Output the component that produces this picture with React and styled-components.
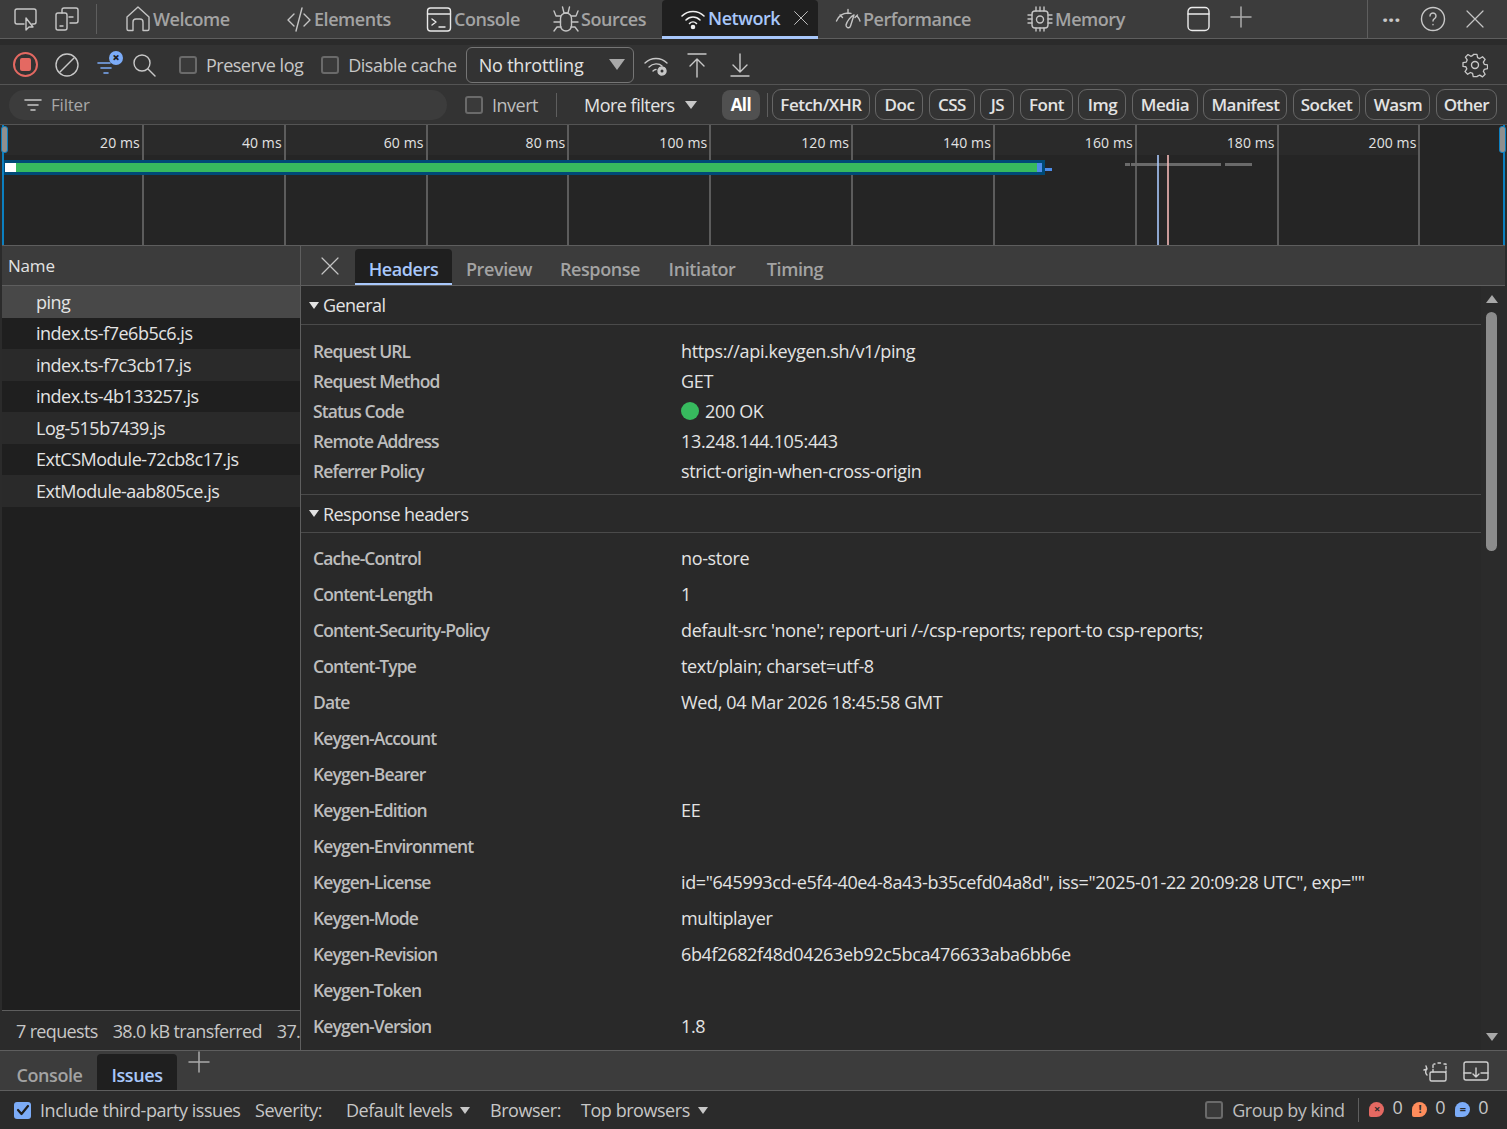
import styled, { createGlobalStyle } from "styled-components";

const GlobalStyle = createGlobalStyle`
  html, body {
    margin: 0;
    padding: 0;
    background: #2b2b2b;
  }
  * { box-sizing: border-box; }
  body {
    font-family: "Open Sans", "Noto Sans", sans-serif;
    color: #e3e3e3;
    letter-spacing: -0.2px;
  }
`;

const Icon = ({ w = 26, h = 26, vb = "0 0 26 26", color = "#c8c8c8", sw = 1.4, children }) => (
  <svg width={w} height={h} viewBox={vb} fill="none" stroke={color} strokeWidth={sw} strokeLinecap="round" strokeLinejoin="round" style={{ flex: "none" }}>
    {children}
  </svg>
);

const Close = ({ size = 20, color = "#c4c4c4" }) => (
  <Icon w={size} h={size} vb="0 0 20 20" color={color} sw={1.2}>
    <path d="M2 2l16 16M18 2L2 18" />
  </Icon>
);

const Plus = ({ size = 24, color = "#aaa" }) => (
  <Icon w={size} h={size} vb="0 0 24 24" color={color} sw={1.5}>
    <path d="M12 2v20M2 12h20" />
  </Icon>
);

const tabs = [
  {
    label: "Welcome", width: 161,
    icon: <path d="M2 23V11L13 1l11 10v12a1.500 1.500 0 0 1-1.500 1.500H18V16a3 3 0 0 0-3-3h-4a3 3 0 0 0-3 3v8.500H3.500A1.500 1.500 0 0 1 2 23z" />,
  },
  {
    label: "Elements", width: 140,
    icon: <path d="M8 8l-6 6 6 6M18 8l6 6-6 6M16 2l-6 23" />,
  },
  {
    label: "Console", width: 127, bright: true,
    icon: <><rect x="1.500" y="2" width="23" height="23" rx="3" /><path d="M1.500 8h23M6 13l4 3-4 3M13 21h6" /></>,
  },
  {
    label: "Sources", width: 122,
    icon: <><rect x="7.500" y="7" width="11" height="18" rx="5.500" /><path d="M9.500 1l1.500 6h4l1.500-6M1 5l2 5h4.500M25 5l-2 5h-4.500M1 16h6.500M25 16h-6.500M1 25l3-4h4M25 25l-3-4h-4" /></>,
  },
];

const tabs2 = [
  {
    label: "Performance", width: 196, pad: 17,
    icon: <><path d="M1.500 15A13 13 0 0 1 13 7a13 13 0 0 1 3 .4M22 10a13 13 0 0 1 3 5M13 3.500v4M5 9l2.500 2.500M22.500 9l-2.500 2.500" /><path d="M11 19c0 3 3.500 4 4.500 1L19 9c-3 1-7 6-8 10z" /></>,
  },
  {
    label: "Memory", width: 171,
    icon: <><rect x="5" y="5" width="16" height="17" rx="3" /><circle cx="13" cy="13.500" r="3.500" /><path d="M9 1v4M13 1v4M17 1v4M9 22v3M13 22v3M17 22v3M1 9h4M1 13h4M1 17h4M21 9h4M21 13h4M21 17h4" /></>,
  },
];

const filterChips = ["Fetch/XHR", "Doc", "CSS", "JS", "Font", "Img", "Media", "Manifest", "Socket", "Wasm", "Other"];
const chipWidths = [98, 48, 46, 34, 53, 48, 66, 84, 67, 65, 61];
const ticks = ["20 ms", "40 ms", "60 ms", "80 ms", "100 ms", "120 ms", "140 ms", "160 ms", "180 ms", "200 ms"];
const files = ["ping", "index.ts-f7e6b5c6.js", "index.ts-f7c3cb17.js", "index.ts-4b133257.js", "Log-515b7439.js", "ExtCSModule-72cb8c17.js", "ExtModule-aab805ce.js"];
const detailTabs = ["Headers", "Preview", "Response", "Initiator", "Timing"];
const detailTabWidths = [97, 94, 108, 96, 90];

const general = [
  ["Request URL", "https://api.keygen.sh/v1/ping"],
  ["Request Method", "GET"],
  ["Status Code", "200 OK", true],
  ["Remote Address", "13.248.144.105:443"],
  ["Referrer Policy", "strict-origin-when-cross-origin"],
];

const response = [
  ["Cache-Control", "no-store"],
  ["Content-Length", "1"],
  ["Content-Security-Policy", "default-src 'none'; report-uri /-/csp-reports; report-to csp-reports;"],
  ["Content-Type", "text/plain; charset=utf-8"],
  ["Date", "Wed, 04 Mar 2026 18:45:58 GMT"],
  ["Keygen-Account", ""],
  ["Keygen-Bearer", ""],
  ["Keygen-Edition", "EE"],
  ["Keygen-Environment", ""],
  ["Keygen-License", 'id="645993cd-e5f4-40e4-8a43-b35cefd04a8d", iss="2025-01-22 20:09:28 UTC", exp=""'],
  ["Keygen-Mode", "multiplayer"],
  ["Keygen-Revision", "6b4f2682f48d04263eb92c5bca476633aba6bb6e"],
  ["Keygen-Token", ""],
  ["Keygen-Version", "1.8"],
];

function PanelTab({ tab }) {
  return (
    <Tab $width={tab.width} $pad={tab.pad}>
      <Icon color={tab.bright ? "#e8e8e8" : "#c4c4c4"}>{tab.icon}</Icon>
      <span>{tab.label}</span>
    </Tab>
  );
}

function App() {
  return (
    <>
      <GlobalStyle />
      <Page>
        <TabBar>
          <Icon w={28} vb="0 0 28 26"><path d="M20 18h2a2 2 0 0 0 2-2V5a2 2 0 0 0-2-2H5a2 2 0 0 0-2 2v11a2 2 0 0 0 2 2h7" /><path d="M14 12v12l3-3 4 0z" /></Icon>
          <DeviceIcon>
            <Icon w={28} vb="0 0 28 26"><path d="M9 7V4a2 2 0 0 1 2-2h12a2 2 0 0 1 2 2v11a2 2 0 0 1-2 2h-6" /><rect x="3" y="7" width="11" height="17" rx="2" /><path d="M7 20h3M16 11h4" /></Icon>
          </DeviceIcon>
          <TabDivider />
          {tabs.map((t) => <PanelTab key={t.label} tab={t} />)}
          <ActiveTab>
            <Icon color="#f0f0f0" sw={1.6}><path d="M2 11c6-6 16-6 22 0M6 15c4-4 10-4 14 0M9.500 18.500c2-2 5-2 7 0" /><circle cx="13" cy="22" r="1.500" fill="#f0f0f0" /></Icon>
            <span>Network</span>
            <CloseSlot><Close size={16} /></CloseSlot>
          </ActiveTab>
          {tabs2.map((t) => <PanelTab key={t.label} tab={t} />)}
          <Icon color="#ececec" vb="0 0 26 26"><rect x="3" y="1.500" width="21" height="23" rx="4" /><path d="M3 8h21" /></Icon>
          <PlusSlot><Plus /></PlusSlot>
          <TabEnd>
            <Dots>···</Dots>
            <Icon><circle cx="13" cy="13" r="11.500" /><path d="M10 10a3 3 0 1 1 4.500 2.600c-1 .6-1.500 1.200-1.500 2.400M13 18.500v.3" /></Icon>
            <Close />
          </TabEnd>
        </TabBar>
        <DarkStrip />
        <Toolbar>
          <RecordButton><RecordDot /></RecordButton>
          <ToolIcon $w={42}><Icon><circle cx="13" cy="13" r="11" /><path d="M6 20L20 6" /></Icon></ToolIcon>
          <FilterClear>
            <Icon color="#7cacf8" sw={1.6}><path d="M1 13h12M4 18h10M7 23h4" /></Icon>
            <ClearBadge>×</ClearBadge>
          </FilterClear>
          <ToolIcon $w={30} $ml={7} $mr={20}><Icon w={24} h={24} vb="0 0 24 24"><circle cx="10" cy="10" r="8" /><path d="M16 16l7 7" /></Icon></ToolIcon>
          <CheckLabel $mr={18}><Check />Preserve log</CheckLabel>
          <CheckLabel $mr={9}><Check />Disable cache</CheckLabel>
          <Throttle>
            <span>No throttling</span>
            <Caret $size={8} $color="#a8a8a8" />
          </Throttle>
          <ToolIcon $w={44}>
            <Icon>
              <path d="M2 11c6-6 16-6 22 0M6 15c4-4 10-4 13-1M10 19c1-1 2-1.500 3-1.500" />
              <circle cx="19" cy="19" r="4" fill="#c8c8c8" stroke="#c8c8c8" strokeDasharray="2 1" />
              <circle cx="19" cy="19" r="1.500" fill="#333" stroke="none" />
            </Icon>
          </ToolIcon>
          <ToolIcon $w={38}><Icon><path d="M4 2h18M13 25V7M6 14l7-7 7 7" /></Icon></ToolIcon>
          <ToolIcon $w={48}><Icon><path d="M13 2v18M6 13l7 7 7-7M4 24h18" /></Icon></ToolIcon>
          <SettingsSlot>
            <Icon>
              <path d="M11 2h4l.7 3.500 2.300 1 3-1.900 2.800 2.800-1.900 3 1 2.300 3.500.7v4l-3.500.7-1 2.300 1.900 3-2.800 2.800-3-1.900-2.300 1L15 26h-4l-.7-3.500-2.300-1-3 1.900-2.800-2.800 1.900-3-1-2.300L0 15v-4l3.500-.7 1-2.300-1.900-3L5.400 2.200l3 1.900 2.300-1z" transform="translate(1 .5) scale(.93)" />
              <circle cx="13" cy="13" r="3.500" />
            </Icon>
          </SettingsSlot>
        </Toolbar>
        <FilterBar>
          <FilterInput>
            <Icon w={18} h={14} vb="0 0 18 14" sw={1.6}><path d="M1 2h16M4 7h10M7 12h4" /></Icon>
            <span>Filter</span>
          </FilterInput>
          <CheckLabel $mr={18} $dim><Check />Invert</CheckLabel>
          <VDivider />
          <MoreFilters>More filters<Caret $size={6} $color="#c8c8c8" /></MoreFilters>
          <AllChip>All</AllChip>
          <VDivider $ml={7} $mr={4} />
          <Chips>
            {filterChips.map((c, i) => <Chip key={c} $width={chipWidths[i]}>{c}</Chip>)}
          </Chips>
        </FilterBar>
        <Timeline>
          <TimeHead>
            {ticks.map((t) => <TimeCell key={t}><TimeLabel>{t}</TimeLabel></TimeCell>)}
          </TimeHead>
          <RequestBar>
            <BarStart />
            <BarBody />
            <BarEnd />
          </RequestBar>
          <BarTail />
          <Ghost $x={1125} $w={5} />
          <Ghost $x={1131} $w={10} />
          <Ghost $x={1141} $w={80} />
          <Ghost $x={1225} $w={27} />
          <Marker $x={1157} $color="#a8c7fa" />
          <Marker $x={1167} $color="#f2b8b5" />
          <SelectionLine $side="left" />
          <SelectionLine $side="right" />
          <Handle $side="left" />
          <Handle $side="right" />
        </Timeline>
        <Split>
          <NamePane>
            <NameHead>Name</NameHead>
            <NameList>
              {files.map((f, i) => <NameRow key={f} $i={i}>{f}</NameRow>)}
            </NameList>
            <Summary>
              <span>7 requests</span>
              <span>38.0 kB transferred</span>
              <span>37.2 kB resources</span>
            </Summary>
          </NamePane>
          <DetailPane>
            <DetailTabs>
              <CloseButton><Close size={20} /></CloseButton>
              {detailTabs.map((t, i) => (
                <DetailTab key={t} $width={detailTabWidths[i]} $active={i === 0}>{t}</DetailTab>
              ))}
            </DetailTabs>
            <DetailBody>
              <Sections>
                <SectionHead $h={39}><Caret $size={5.500} $color="#e3e3e3" />General</SectionHead>
                <SectionRows $pt={11} $pb={8}>
                  {general.map(([k, v, ok]) => (
                    <HeaderRow key={k} $h={30}>
                      <HeaderKey>{k}</HeaderKey>
                      <HeaderValue>{ok && <StatusDot />}{v}</HeaderValue>
                    </HeaderRow>
                  ))}
                </SectionRows>
                <SectionHead $h={39} $top><Caret $size={5.500} $color="#e3e3e3" />Response headers</SectionHead>
                <SectionRows $pt={7} $pb={0}>
                  {response.map(([k, v]) => (
                    <HeaderRow key={k} $h={36}>
                      <HeaderKey>{k}</HeaderKey>
                      <HeaderValue>{v}</HeaderValue>
                    </HeaderRow>
                  ))}
                </SectionRows>
              </Sections>
              <Scrollbar>
                <ScrollArrow $up />
                <ScrollTrack><ScrollThumb /></ScrollTrack>
                <ScrollArrow />
              </Scrollbar>
            </DetailBody>
          </DetailPane>
        </Split>
        <DrawerTabs>
          <DrawerTab>Console</DrawerTab>
          <DrawerTab $active>Issues</DrawerTab>
          <PlusSlot $ml={10}><Plus /></PlusSlot>
          <DrawerEnd>
            <Icon w={28} vb="0 0 28 26" color="#d0d0d0"><path d="M6 10a4 4 0 0 0 0 6M3 11l3-1-1-3" /><rect x="9" y="13" width="16" height="9" rx="1.500" /><path d="M12 13V5h2M17 4h3M23 5h2v8" strokeDasharray="2.500 2" /></Icon>
            <Icon w={28} vb="0 0 28 26" color="#d0d0d0"><rect x="2" y="3" width="24" height="18" rx="2" /><path d="M2 14h7M19 14h7M14 9v9M11 15l3 3 3-3" /></Icon>
          </DrawerEnd>
        </DrawerTabs>
        <IssuesBar>
          <ThirdParty><CheckedBox><Icon w={14} h={14} vb="0 0 14 14" color="#1f1f1f" sw={2.2}><path d="M2 7l3.500 4L12 3" /></Icon></CheckedBox>Include third-party issues</ThirdParty>
          <IssueLabel $w={91}>Severity:</IssueLabel>
          <IssueSelect $w={144}>Default levels<Caret $size={5} $color="#c8c8c8" /></IssueSelect>
          <IssueLabel $w={91}>Browser:</IssueLabel>
          <IssueSelect>Top browsers<Caret $size={5} $color="#c8c8c8" /></IssueSelect>
          <IssueEnd>
            <CheckLabel $mr={14} $dim><Check />Group by kind</CheckLabel>
            <VDivider $h={24} />
            <Counter $color="#e46962" $glyph="×">0</Counter>
            <Counter $color="#ff8d5c" $glyph="!">0</Counter>
            <Counter $color="#7cacf8" $glyph="=">0</Counter>
          </IssueEnd>
        </IssuesBar>
      </Page>
    </>
  );
}

const Page = styled.div`
  width: 1507px;
  height: 1129px;
  display: flex;
  flex-direction: column;
  overflow: hidden;
  background: #2b2b2b;
  padding: 0 2px;
`;

const TabBar = styled.div`
  height: 39px;
  flex: none;
  margin: 0 -2px;
  padding-left: 12px;
  display: flex;
  align-items: center;
  background: #3c3c3c;
  border-bottom: 1px solid #5e5e5e;
`;

const DeviceIcon = styled.div`
  margin-left: 13px;
  display: flex;
`;

const TabDivider = styled.div`
  width: 1px;
  height: 30px;
  margin: 0 15px 0 15px;
  background: #5e5e5e;
`;

const Tab = styled.div`
  width: ${(p) => p.$width}px;
  flex: none;
  height: 38px;
  padding-left: ${(p) => p.$pad ?? 13}px;
  display: flex;
  align-items: center;
  font-size: 18px;
  font-weight: 600;
  color: #a3a3a3;
  letter-spacing: -0.45px;
  gap: 2px;
`;

const ActiveTab = styled.div`
  width: 156px;
  flex: none;
  height: 39px;
  padding: 0 9px 0 18px;
  display: flex;
  align-items: center;
  gap: 2px;
  font-size: 18px;
  font-weight: 600;
  letter-spacing: -0.45px;
  color: #a8c7fa;
  background: #1f1f1f;
  border-radius: 4px 4px 0 0;
  border-bottom: 3px solid #a8c7fa;
  margin-top: 1px;
`;

const CloseSlot = styled.div`
  margin-left: auto;
  display: flex;
`;

const PlusSlot = styled.div`
  display: flex;
  margin-left: ${(p) => p.$ml ?? 18}px;
  margin-top: -4px;
`;

const TabEnd = styled.div`
  margin-left: auto;
  height: 38px;
  width: 140px;
  padding: 0 22px 0 14px;
  border-left: 1px solid #5e5e5e;
  display: flex;
  align-items: center;
  justify-content: space-between;
`;

const Dots = styled.span`
  font-size: 22px;
  font-weight: 700;
  color: #c8c8c8;
  line-height: 1;
`;

const DarkStrip = styled.div`
  height: 6px;
  flex: none;
  margin: 0 -2px;
  background: #2b2b2b;
`;

const Toolbar = styled.div`
  height: 40px;
  flex: none;
  margin: 0 -2px;
  padding-left: 13px;
  display: flex;
  align-items: center;
  background: #333;
  border-bottom: 1px solid #545454;
`;

const RecordButton = styled.div`
  width: 25px;
  height: 25px;
  flex: none;
  border-radius: 50%;
  border: 2px solid #e46962;
  display: flex;
  align-items: center;
  justify-content: center;
  margin-right: 8px;
`;

const RecordDot = styled.div`
  width: 11px;
  height: 13px;
  border-radius: 2px;
  background: #e46962;
`;

const ToolIcon = styled.div`
  width: ${(p) => p.$w}px;
  flex: none;
  display: flex;
  justify-content: center;
  margin-left: ${(p) => p.$ml ?? 0}px;
  margin-right: ${(p) => p.$mr ?? 0}px;
`;

const FilterClear = styled.div`
  width: 36px;
  height: 30px;
  flex: none;
  position: relative;
  margin-left: 2px;
  margin-right: -4px;
  padding-left: 7px;
`;

const ClearBadge = styled.div`
  position: absolute;
  left: 19px;
  top: 1px;
  width: 14px;
  height: 14px;
  border-radius: 50%;
  background: #7cacf8;
  color: #1f1f1f;
  font-size: 13px;
  font-weight: 800;
  line-height: 13px;
  text-align: center;
`;

const CheckLabel = styled.label`
  display: flex;
  align-items: center;
  gap: 9px;
  font-size: 18px;
  letter-spacing: -0.5px;
  margin-right: ${(p) => p.$mr}px;
  color: ${(p) => (p.$dim ? "#bdbdbd" : "#c7c7c7")};
  white-space: nowrap;
`;

const Check = styled.span`
  display: inline-block;
  width: 18px;
  height: 18px;
  border: 2px solid #6a6a6a;
  border-radius: 3px;
  background: #3a3a3a;
`;

const Throttle = styled.div`
  width: 168px;
  height: 36px;
  flex: none;
  border: 1px solid #757575;
  border-radius: 6px;
  padding: 0 8px 0 12px;
  display: flex;
  align-items: center;
  justify-content: space-between;
  font-size: 18px;
  color: #e3e3e3;
`;

const Caret = styled.span`
  display: inline-block;
  flex: none;
  width: 0;
  height: 0;
  border-left: ${(p) => p.$size}px solid transparent;
  border-right: ${(p) => p.$size}px solid transparent;
  border-top: ${(p) => p.$size * 1.4}px solid ${(p) => p.$color};
`;

const SettingsSlot = styled.div`
  margin-left: auto;
  margin-right: 19px;
  display: flex;
`;

const FilterBar = styled.div`
  height: 40px;
  flex: none;
  margin: 0 -2px;
  padding-left: 9px;
  display: flex;
  align-items: center;
  background: #333;
  border-bottom: 1px solid #545454;
`;

const FilterInput = styled.div`
  width: 438px;
  height: 30px;
  flex: none;
  margin-right: 18px;
  padding-left: 15px;
  display: flex;
  align-items: center;
  gap: 9px;
  border-radius: 15px;
  background: #3c3c3c;
  font-size: 17px;
  color: #a8a8a8;
`;

const VDivider = styled.div`
  width: 1px;
  height: ${(p) => p.$h ?? 24}px;
  flex: none;
  background: #5e5e5e;
  margin-left: ${(p) => p.$ml ?? 0}px;
  margin-right: ${(p) => p.$mr ?? 0}px;
`;

const MoreFilters = styled.div`
  width: 165px;
  flex: none;
  padding-left: 27px;
  display: flex;
  align-items: center;
  gap: 10px;
  font-size: 18px;
  letter-spacing: -0.5px;
  white-space: nowrap;
  color: #e3e3e3;
`;

const AllChip = styled.div`
  width: 38px;
  height: 30px;
  flex: none;
  border-radius: 8px;
  background: #505050;
  display: flex;
  align-items: center;
  justify-content: center;
  font-size: 17px;
  font-weight: 700;
  letter-spacing: -0.5px;
  color: #fff;
`;

const Chips = styled.div`
  display: flex;
  gap: 5.500px;
`;

const Chip = styled.div`
  width: ${(p) => p.$width}px;
  height: 31px;
  flex: none;
  border: 1px solid #666;
  border-radius: 9px;
  display: flex;
  align-items: center;
  justify-content: center;
  font-size: 17px;
  font-weight: 600;
  letter-spacing: -0.5px;
  color: #e3e3e3;
`;

const Timeline = styled.div`
  height: 121px;
  flex: none;
  position: relative;
  background: #252525;
  border-bottom: 1px solid #5e5e5e;
`;

const TimeHead = styled.div`
  height: 120px;
  display: flex;
`;

const TimeCell = styled.div`
  width: 141.85px;
  flex: none;
  border-right: 2px solid #5c5c5c;
  background: linear-gradient(#2a2a2a 0 30px, transparent 30px);
  padding: 6px 2px 0 0;
  text-align: right;
`;

const TimeLabel = styled.span`
  font-size: 14px;
  letter-spacing: 0.1px;
  color: #e3e3e3;
`;

const RequestBar = styled.div`
  position: absolute;
  left: 2px;
  top: 35px;
  width: 1041px;
  height: 15px;
  padding: 3px;
  padding-left: 1px;
  background: #004a77;
  display: flex;
`;

const BarStart = styled.div`
  width: 11px;
  background: #fff;
`;

const BarBody = styled.div`
  flex: 1;
  background: #37ba5e;
`;

const BarEnd = styled.div`
  width: 5px;
  background: #4d8ce8;
`;

const BarTail = styled.div`
  position: absolute;
  left: 1043px;
  top: 43px;
  width: 7px;
  height: 3px;
  background: #4d8ce8;
`;

const Ghost = styled.div`
  position: absolute;
  left: ${(p) => p.$x - 2}px;
  top: 38px;
  width: ${(p) => p.$w}px;
  height: 3px;
  background: #6a6a6a;
`;

const Marker = styled.div`
  position: absolute;
  left: ${(p) => p.$x - 2}px;
  top: 30px;
  bottom: 0;
  width: 2px;
  background: ${(p) => p.$color};
  opacity: 0.8;
`;

const SelectionLine = styled.div`
  position: absolute;
  ${(p) => p.$side}: 0;
  top: 0;
  bottom: 0;
  width: 2px;
  background: #0b7fc0;
`;

const Handle = styled.div`
  position: absolute;
  ${(p) => p.$side}: -1px;
  top: 1px;
  width: 7px;
  height: 27px;
  border-radius: 3px;
  background: #8f8f8f;
  border: 1px solid #0b7fc0;
`;

const Split = styled.div`
  flex: 1;
  min-height: 0;
  display: flex;
`;

const NamePane = styled.div`
  width: 298px;
  flex: none;
  display: flex;
  flex-direction: column;
  background: #1f1f1f;
`;

const NameHead = styled.div`
  height: 40px;
  flex: none;
  padding-left: 6px;
  display: flex;
  align-items: center;
  background: #3c3c3c;
  border-bottom: 1px solid #5e5e5e;
  font-size: 17px;
  color: #e3e3e3;
`;

const NameList = styled.div`
  flex: 1;
  min-height: 0;
`;

const NameRow = styled.div`
  height: 31.5px;
  padding-left: 34px;
  display: flex;
  align-items: center;
  font-size: 18px;
  letter-spacing: -0.5px;
  color: #e3e3e3;
  background: ${(p) => (p.$i === 0 ? "#484848" : p.$i % 2 ? "#1f1f1f" : "#2a2a2a")};
`;

const Summary = styled.div`
  height: 40px;
  flex: none;
  padding-left: 14px;
  display: flex;
  align-items: center;
  gap: 15px;
  overflow: hidden;
  white-space: nowrap;
  border-top: 1px solid #5e5e5e;
  background: #2b2b2b;
  font-size: 18px;
  letter-spacing: -0.65px;
  color: #c7c7c7;
`;

const DetailPane = styled.div`
  flex: 1;
  min-width: 0;
  display: flex;
  flex-direction: column;
  border-left: 1px solid #5e5e5e;
`;

const DetailTabs = styled.div`
  height: 40px;
  flex: none;
  padding-top: 3px;
  display: flex;
  align-items: stretch;
  background: #3c3c3c;
  border-bottom: 1px solid #5e5e5e;
`;

const CloseButton = styled.div`
  width: 54px;
  flex: none;
  padding: 7px 0 0 19px;
`;

const DetailTab = styled.div`
  width: ${(p) => p.$width}px;
  flex: none;
  display: flex;
  align-items: flex-end;
  justify-content: center;
  padding-bottom: 2px;
  font-size: 18px;
  font-weight: 600;
  letter-spacing: -0.4px;
  color: ${(p) => (p.$active ? "#a8c7fa" : "#a3a3a3")};
  background: ${(p) => (p.$active ? "#1f1f1f" : "transparent")};
  border-radius: 4px 4px 0 0;
  border-bottom: ${(p) => (p.$active ? "2px solid #a8c7fa" : "2px solid transparent")};
`;

const DetailBody = styled.div`
  flex: 1;
  min-height: 0;
  display: flex;
  background: #292929;
`;

const Sections = styled.div`
  flex: 1;
  min-width: 0;
  overflow: hidden;
`;

const SectionHead = styled.div`
  height: ${(p) => p.$h}px;
  padding-left: 8px;
  display: flex;
  align-items: center;
  gap: 4px;
  font-size: 18px;
  letter-spacing: -0.55px;
  color: #e3e3e3;
  border-bottom: 1px solid #4a4a4a;
  border-top: ${(p) => (p.$top ? "1px solid #4a4a4a" : "none")};
`;

const SectionRows = styled.div`
  padding: ${(p) => p.$pt}px 0 ${(p) => p.$pb}px;
`;

const HeaderRow = styled.div`
  height: ${(p) => p.$h}px;
  padding-left: 12px;
  display: flex;
  align-items: center;
  white-space: nowrap;
`;

const HeaderKey = styled.div`
  width: 368px;
  flex: none;
  font-size: 17.500px;
  font-weight: 600;
  letter-spacing: -0.9px;
  color: #bdbdbd;
`;

const HeaderValue = styled.div`
  display: flex;
  align-items: center;
  gap: 6px;
  font-size: 18px;
  letter-spacing: -0.35px;
  color: #e3e3e3;
`;

const StatusDot = styled.span`
  width: 18px;
  height: 18px;
  border-radius: 50%;
  background: #37ba5e;
`;

const Scrollbar = styled.div`
  width: 24px;
  flex: none;
  display: flex;
  flex-direction: column;
  align-items: center;
  padding: 9px 3px 9px 0;
  background: #2b2b2b;
`;

const ScrollArrow = styled.div`
  width: 0;
  height: 0;
  flex: none;
  border-left: 6px solid transparent;
  border-right: 6px solid transparent;
  ${(p) => (p.$up ? "border-bottom: 8px solid #a8a8a8;" : "border-top: 8px solid #a8a8a8;")}
`;

const ScrollTrack = styled.div`
  flex: 1;
  width: 100%;
  padding: 9px 5px 0;
`;

const ScrollThumb = styled.div`
  height: 239px;
  border-radius: 7px;
  background: #8c8c8c;
`;

const DrawerTabs = styled.div`
  height: 41px;
  flex: none;
  margin: 0 -2px;
  padding: 3px 0 0 2px;
  display: flex;
  align-items: stretch;
  background: #3c3c3c;
  border-top: 1px solid #5e5e5e;
  border-bottom: 1px solid #5e5e5e;
`;

const DrawerTab = styled.div`
  width: ${(p) => (p.$active ? 80 : 95)}px;
  flex: none;
  display: flex;
  align-items: flex-end;
  justify-content: center;
  padding-bottom: 3px;
  font-size: 18px;
  font-weight: 600;
  letter-spacing: -0.4px;
  color: ${(p) => (p.$active ? "#a8c7fa" : "#a3a3a3")};
  background: ${(p) => (p.$active ? "#1f1f1f" : "transparent")};
  border-radius: 4px 4px 0 0;
`;

const DrawerEnd = styled.div`
  margin-left: auto;
  margin-right: 17px;
  display: flex;
  align-items: center;
  gap: 13px;
`;

const IssuesBar = styled.div`
  height: 38px;
  flex: none;
  margin: 0 -2px;
  padding-left: 14px;
  display: flex;
  align-items: center;
  background: #2b2b2b;
  font-size: 18px;
  letter-spacing: -0.45px;
  color: #c7c7c7;
`;

const ThirdParty = styled.div`
  width: 241px;
  flex: none;
  display: flex;
  align-items: center;
  gap: 9px;
  white-space: nowrap;
`;

const CheckedBox = styled.span`
  width: 17px;
  height: 17px;
  flex: none;
  border-radius: 3px;
  background: #7cacf8;
  display: flex;
  align-items: center;
  justify-content: center;
`;

const IssueLabel = styled.div`
  width: ${(p) => p.$w}px;
  flex: none;
`;

const IssueSelect = styled.div`
  ${(p) => (p.$w ? `width: ${p.$w}px; flex: none;` : "")}
  display: flex;
  align-items: center;
  gap: 8px;
`;

const IssueEnd = styled.div`
  margin-left: auto;
  display: flex;
  align-items: center;
  padding-right: 19px;
`;

const Counter = styled.div`
  display: flex;
  align-items: center;
  gap: 8px;
  margin-left: 10px;
  margin-top: -7px;
  color: #c7c7c7;

  &:nth-of-type(1) { margin-left: 14px; }

  &::before {
    content: "${(p) => p.$glyph}";
    width: 15px;
    height: 15px;
    margin-top: 6px;
    border-radius: 50% 50% 50% 2px;
    background: ${(p) => p.$color};
    color: #2b2b2b;
    font-size: 11px;
    font-weight: 700;
    line-height: 14px;
    text-align: center;
  }
`;

export default App;
